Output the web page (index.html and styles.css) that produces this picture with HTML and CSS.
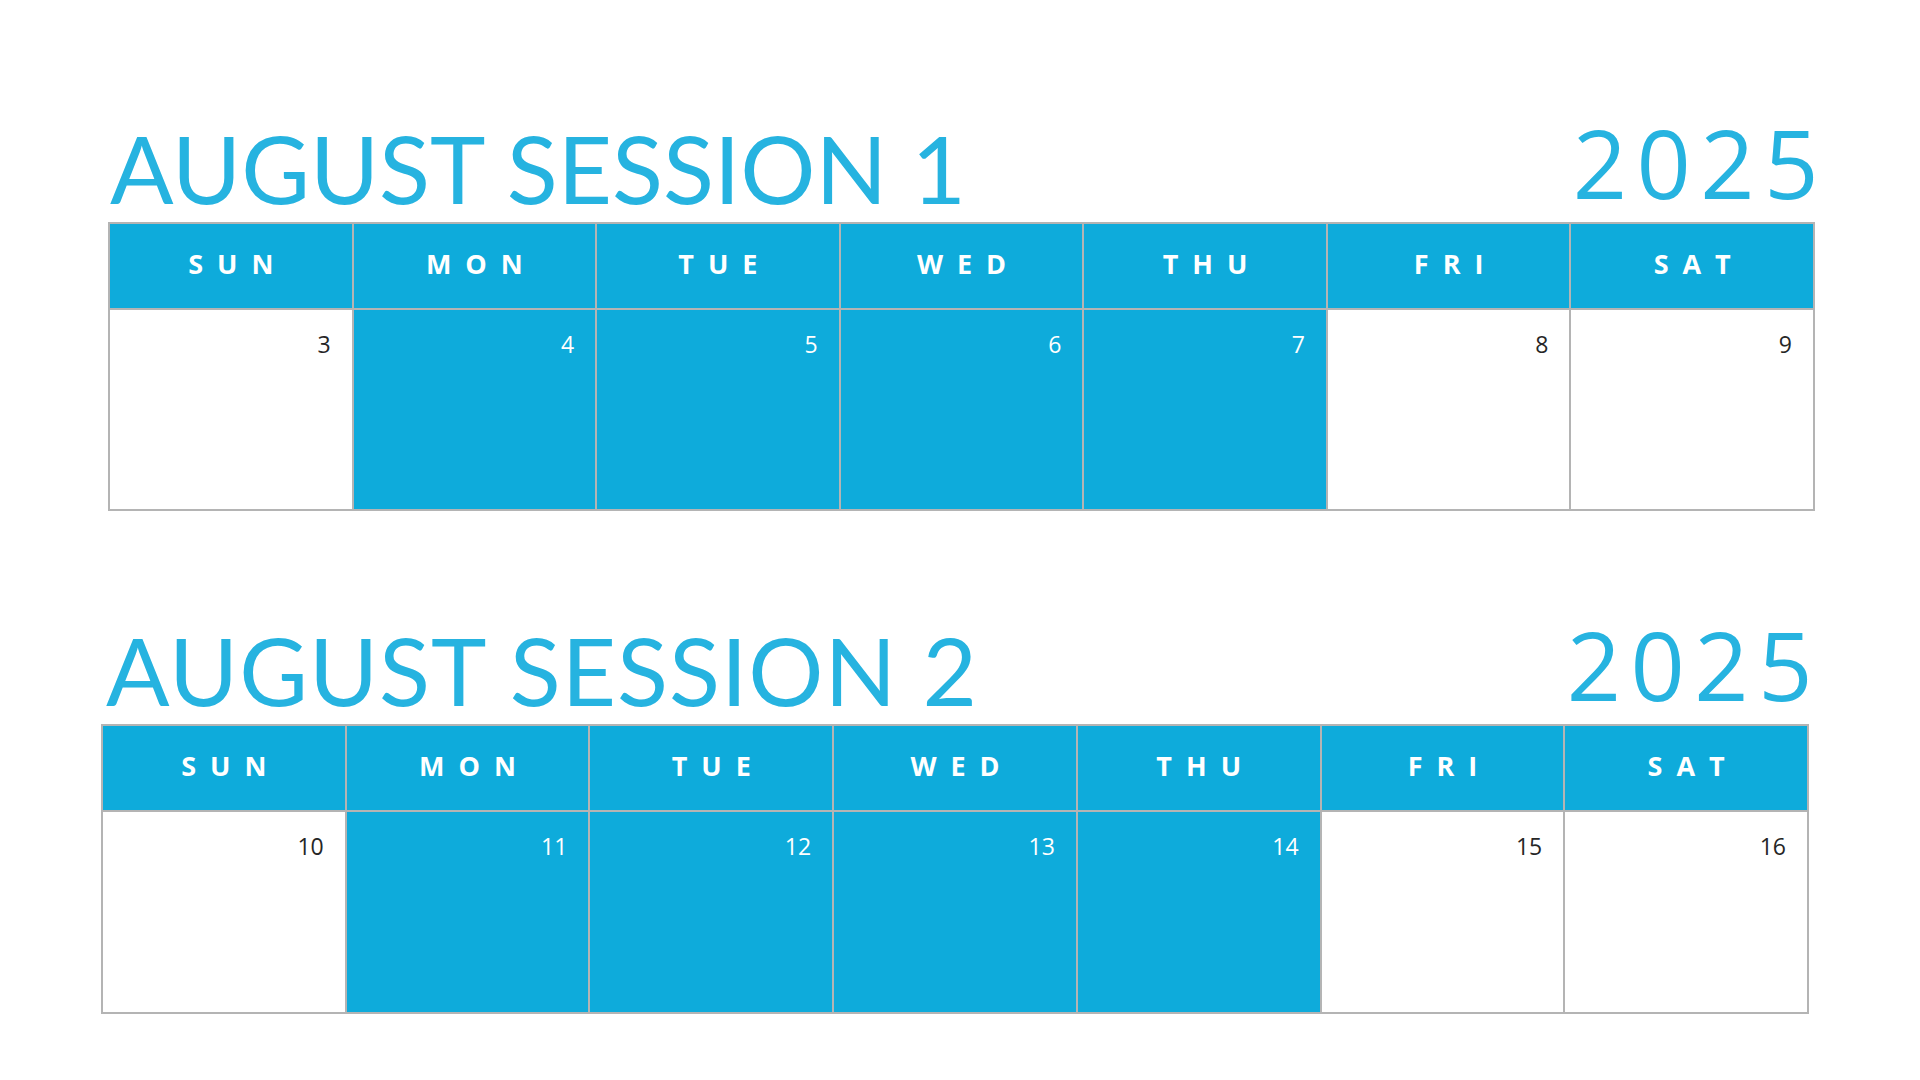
FILE: index.html
```html
<!DOCTYPE html>
<html lang="en">
<head>
<meta charset="utf-8">
<title>August Sessions 2025</title>
<link rel="stylesheet" href="styles.css">
</head>
<body>
<main class="page">
  <section class="session session-1">
    <header class="title-row">
      <h1 class="title">AUGUST SESSION 1</h1>
      <div class="year">2025</div>
    </header>
    <div class="calendar">
      <div class="day-head">SUN</div>
      <div class="day-head">MON</div>
      <div class="day-head">TUE</div>
      <div class="day-head">WED</div>
      <div class="day-head">THU</div>
      <div class="day-head">FRI</div>
      <div class="day-head">SAT</div>
      <div class="cell">3</div>
      <div class="cell active">4</div>
      <div class="cell active">5</div>
      <div class="cell active">6</div>
      <div class="cell active">7</div>
      <div class="cell">8</div>
      <div class="cell">9</div>
    </div>
  </section>

  <section class="session session-2">
    <header class="title-row">
      <h1 class="title">AUGUST SESSION 2</h1>
      <div class="year">2025</div>
    </header>
    <div class="calendar">
      <div class="day-head">SUN</div>
      <div class="day-head">MON</div>
      <div class="day-head">TUE</div>
      <div class="day-head">WED</div>
      <div class="day-head">THU</div>
      <div class="day-head">FRI</div>
      <div class="day-head">SAT</div>
      <div class="cell">10</div>
      <div class="cell active">11</div>
      <div class="cell active">12</div>
      <div class="cell active">13</div>
      <div class="cell active">14</div>
      <div class="cell">15</div>
      <div class="cell">16</div>
    </div>
  </section>
</main>
</body>
</html>
```

FILE: styles.css
```css
html, body {
  margin: 0;
  padding: 0;
  background: #ffffff;
}

.page {
  width: 1920px;
  height: 1080px;
  box-sizing: border-box;
  padding-top: 115px;
}

.session-1 {
  margin-left: 108px;
  width: 1707px;
}

.session-2 {
  margin-left: 101px;
  width: 1708px;
  margin-top: 106px;
}

.title-row {
  display: flex;
  justify-content: space-between;
  align-items: flex-end;
  margin-bottom: 7px;
}

.title {
  margin: 0;
  font-family: "Lato", "Liberation Sans", sans-serif;
  font-weight: 400;
  font-size: 94px;
  line-height: 94px;
  letter-spacing: 0;
  color: #26b3e0;
  white-space: nowrap;
}

.session-1 .title {
  padding-left: 2px;
}

.session-2 .title {
  padding-left: 5px;
  letter-spacing: 1px;
}

.year {
  font-family: "Open Sans", "Liberation Sans", sans-serif;
  font-weight: 400;
  font-size: 95px;
  line-height: 95px;
  letter-spacing: 9.5px;
  margin-right: -13px;
  margin-bottom: 5px;
  color: #26b3e0;
}

.calendar {
  display: grid;
  grid-template-columns: repeat(7, 1fr);
  grid-template-rows: 84px 199px;
  gap: 2px;
  border: 2px solid #b4b4b4;
  background: #b4b4b4;
}

.session-2 .calendar {
  grid-template-rows: 84px 200px;
}

.day-head {
  background: #0eabdb;
  color: #ffffff;
  font-family: "Open Sans", "Liberation Sans", sans-serif;
  font-weight: 700;
  font-size: 27px;
  letter-spacing: 14px;
  padding-left: 14px;
  padding-bottom: 5px;
  display: flex;
  align-items: center;
  justify-content: center;
}

.cell {
  background: #ffffff;
  color: #262626;
  font-family: "Open Sans", "Liberation Sans", sans-serif;
  font-size: 23px;
  line-height: 1;
  text-align: right;
  padding: 23px 21px 0 0;
}

.cell.active {
  background: #0eabdb;
  color: #ffffff;
}
```
